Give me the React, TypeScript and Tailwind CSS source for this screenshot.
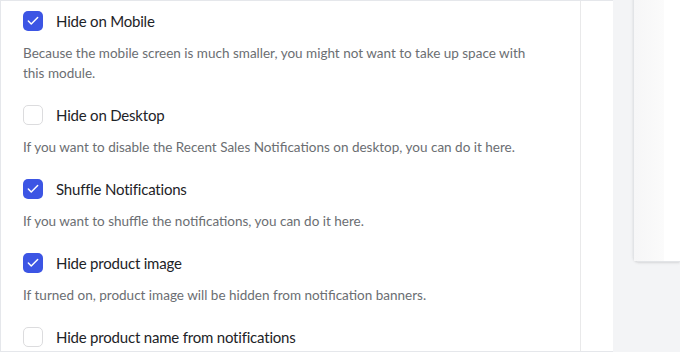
import { Check } from "lucide-react";

type Option = {
  label: string;
  description: string;
  checked: boolean;
};

const options: Option[] = [
  {
    label: "Hide on Mobile",
    description:
      "Because the mobile screen is much smaller, you might not want to take up space with this module.",
    checked: true,
  },
  {
    label: "Hide on Desktop",
    description: "If you want to disable the Recent Sales Notifications on desktop, you can do it here.",
    checked: false,
  },
  {
    label: "Shuffle Notifications",
    description: "If you want to shuffle the notifications, you can do it here.",
    checked: true,
  },
  {
    label: "Hide product image",
    description: "If turned on, product image will be hidden from notification banners.",
    checked: true,
  },
  {
    label: "Hide product name from notifications",
    description: "",
    checked: false,
  },
];

function Checkbox({ checked }: { checked: boolean }) {
  if (checked) {
    return (
      <span className="flex h-5 w-5 shrink-0 items-center justify-center rounded-[5px] bg-[#3c55e4]">
        <Check className="h-3.5 w-3.5 text-white" strokeWidth={2.5} />
      </span>
    );
  }
  return <span className="h-5 w-5 shrink-0 rounded-[5px] border border-[#dcdcde] bg-white" />;
}

export default function App() {
  return (
    <div
      className="flex h-[352px] w-[680px] overflow-hidden bg-[#f3f4f6]"
      style={{ fontFamily: 'Lato, "Noto Sans", sans-serif' }}
    >
      <div className="flex h-full w-[613px] shrink-0 border-y border-l border-[#e5e7eb] bg-white">
        <div className="w-[580px] shrink-0 border-r border-[#e9e9ea] pl-[22px] pr-[30px] pt-[10px]">
          {options.map((opt) => (
            <div key={opt.label} className="mb-[22px]">
              <label className="flex items-center gap-[13px]">
                <Checkbox checked={opt.checked} />
                <span className="text-[15px] leading-5 tracking-[-0.2px] text-[#1d2327]">{opt.label}</span>
              </label>
              {opt.description && (
                <p className="mt-[12px] text-[13.5px] leading-5 text-[#6b6e72]">{opt.description}</p>
              )}
            </div>
          ))}
        </div>
      </div>
      <div className="flex-1 pl-[20px]">
        <div className="flex h-[270px] -mt-2 rounded-bl-md border-b border-l border-[#e2e4e7] bg-white shadow-sm">
          <div className="w-[30px] bg-gradient-to-r from-[#f6f6f7] to-[#fbfbfb]" />
          <div className="flex-1 bg-white" />
        </div>
      </div>
    </div>
  );
}
